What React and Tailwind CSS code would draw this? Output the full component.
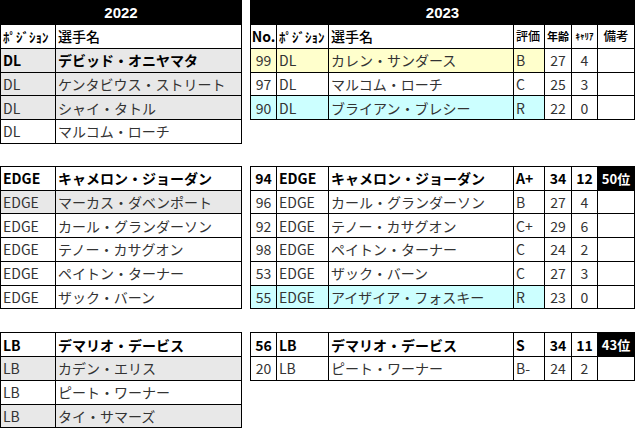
const FONT = { fontFamily: '"Noto Sans CJK JP", "Liberation Sans", sans-serif' }

const LEFT_COLS = 'grid grid-cols-[55px_186px]'
const RIGHT_COLS = 'grid grid-cols-[26px_52px_185px_31px_27px_26px_37px]'

const BG = {
  gray: 'bg-[#e8e8e8]',
  yellow: 'bg-[#ffffcc]',
  cyan: 'bg-[#ccffff]',
  white: 'bg-white',
}

function Cell({ children, className = '', align = 'left' }) {
  const a = align === 'center' ? 'justify-center' : 'justify-start pl-[2px]'
  return (
    <div className={`flex items-center overflow-hidden whitespace-nowrap border-r border-b border-black h-[23.75px] leading-none ${a} ${className}`}>
      {children}
    </div>
  )
}

function YearBar({ year }) {
  return (
    <div className="flex items-center justify-center h-[24px] bg-black border-r border-b border-black text-white font-bold text-[15px] leading-none" style={{ fontFamily: '"Liberation Sans", sans-serif' }}>
      {year}
    </div>
  )
}

function LeftTable({ year, header, rows }) {
  return (
    <div className="w-[242px] border-l border-t border-black">
      {year && <YearBar year={year} />}
      {header && (
        <div className={LEFT_COLS}>
          <Cell className="text-[13px] font-bold text-black">ﾎﾟｼﾞｼｮﾝ</Cell>
          <Cell className="text-[14px] font-medium text-black">選手名</Cell>
        </div>
      )}
      {rows.map((r, i) => {
        const txt = r.bold ? 'font-bold text-black' : 'text-[#333]'
        return (
          <div key={i} className={`${LEFT_COLS} ${BG[r.bg || 'white']}`}>
            <Cell className={`text-[14px] ${txt}`}>{r.pos}</Cell>
            <Cell className={`text-[14px] ${txt}`}>{r.name}</Cell>
          </div>
        )
      })}
    </div>
  )
}

function RightTable({ year, header, rows }) {
  return (
    <div className="w-[385px] border-l border-t border-black">
      {year && <YearBar year={year} />}
      {header && (
        <div className={RIGHT_COLS}>
          <Cell align="center" className="text-[14px] font-bold text-black">No.</Cell>
          <Cell className="text-[13px] font-bold text-black">ﾎﾟｼﾞｼｮﾝ</Cell>
          <Cell className="text-[14px] font-medium text-black">選手名</Cell>
          <Cell className="text-[12px] font-medium text-black">評価</Cell>
          <Cell align="center" className="text-[11px] font-bold text-black">年齢</Cell>
          <Cell align="center" className="text-[9px] font-bold text-black">ｷｬﾘｱ</Cell>
          <Cell align="center" className="text-[12.5px] font-medium text-black">備考</Cell>
        </div>
      )}
      {rows.map((r, i) => {
        const txt = r.bold ? 'font-bold text-black' : 'text-[#333]'
        const bg = BG[r.bg || 'white']
        return (
          <div key={i} className={RIGHT_COLS}>
            <Cell align="center" className={`text-[14px] ${txt} ${bg}`}>{r.no}</Cell>
            <Cell className={`text-[14px] ${txt} ${bg}`}>{r.pos}</Cell>
            <Cell className={`text-[14px] ${txt} ${bg}`}>{r.name}</Cell>
            <Cell className={`text-[14px] ${txt} ${bg}`}>{r.grade}</Cell>
            <Cell align="center" className={`text-[14px] ${txt}`}>{r.age}</Cell>
            <Cell align="center" className={`text-[14px] ${txt}`}>{r.exp}</Cell>
            {r.rank ? (
              <Cell align="center" className="text-[13px] font-bold text-white bg-black">{r.rank}</Cell>
            ) : (
              <Cell>{''}</Cell>
            )}
          </div>
        )
      })}
    </div>
  )
}

const sections = [
  {
    left: {
      year: '2022',
      header: true,
      rows: [
        { pos: 'DL', name: 'デビッド・オニヤマタ', bold: true, bg: 'gray' },
        { pos: 'DL', name: 'ケンタビウス・ストリート', bg: 'gray' },
        { pos: 'DL', name: 'シャイ・タトル', bg: 'gray' },
        { pos: 'DL', name: 'マルコム・ローチ' },
      ],
    },
    right: {
      year: '2023',
      header: true,
      rows: [
        { no: 99, pos: 'DL', name: 'カレン・サンダース', grade: 'B', age: 27, exp: 4, bg: 'yellow' },
        { no: 97, pos: 'DL', name: 'マルコム・ローチ', grade: 'C', age: 25, exp: 3 },
        { no: 90, pos: 'DL', name: 'ブライアン・ブレシー', grade: 'R', age: 22, exp: 0, bg: 'cyan' },
      ],
    },
    mt: 'mt-0',
  },
  {
    left: {
      rows: [
        { pos: 'EDGE', name: 'キャメロン・ジョーダン', bold: true },
        { pos: 'EDGE', name: 'マーカス・ダベンポート', bg: 'gray' },
        { pos: 'EDGE', name: 'カール・グランダーソン' },
        { pos: 'EDGE', name: 'テノー・カサグオン' },
        { pos: 'EDGE', name: 'ペイトン・ターナー' },
        { pos: 'EDGE', name: 'ザック・バーン' },
      ],
    },
    right: {
      rows: [
        { no: 94, pos: 'EDGE', name: 'キャメロン・ジョーダン', grade: 'A+', age: 34, exp: 12, bold: true, rank: '50位' },
        { no: 96, pos: 'EDGE', name: 'カール・グランダーソン', grade: 'B', age: 27, exp: 4 },
        { no: 92, pos: 'EDGE', name: 'テノー・カサグオン', grade: 'C+', age: 29, exp: 6 },
        { no: 98, pos: 'EDGE', name: 'ペイトン・ターナー', grade: 'C', age: 24, exp: 2 },
        { no: 53, pos: 'EDGE', name: 'ザック・バーン', grade: 'C', age: 27, exp: 3 },
        { no: 55, pos: 'EDGE', name: 'アイザイア・フォスキー', grade: 'R', age: 23, exp: 0, bg: 'cyan' },
      ],
    },
    mt: 'mt-[22px]',
  },
  {
    left: {
      rows: [
        { pos: 'LB', name: 'デマリオ・デービス', bold: true },
        { pos: 'LB', name: 'カデン・エリス', bg: 'gray' },
        { pos: 'LB', name: 'ピート・ワーナー' },
        { pos: 'LB', name: 'タイ・サマーズ', bg: 'gray' },
      ],
    },
    right: {
      rows: [
        { no: 56, pos: 'LB', name: 'デマリオ・デービス', grade: 'S', age: 34, exp: 11, bold: true, rank: '43位' },
        { no: 20, pos: 'LB', name: 'ピート・ワーナー', grade: 'B-', age: 24, exp: 2 },
      ],
    },
    mt: 'mt-[23px]',
  },
]

export default function App() {
  return (
    <div className="w-[640px] h-[443px] bg-white overflow-hidden" style={FONT}>
      {sections.map((s, i) => (
        <div key={i} className={`flex items-start gap-[8px] ${s.mt}`}>
          <LeftTable {...s.left} />
          <RightTable {...s.right} />
        </div>
      ))}
    </div>
  )
}
